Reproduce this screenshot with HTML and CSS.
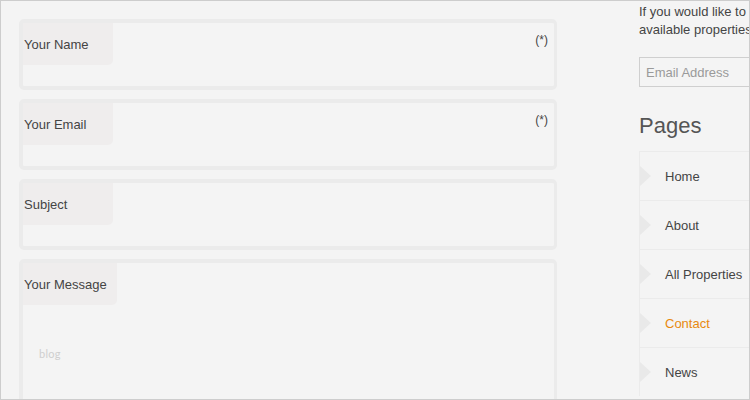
FILE: index.html
```html
<!DOCTYPE html>
<html>
<head>
<meta charset="utf-8">
<link rel="stylesheet" href="styles.css">
</head>
<body>
<div class="frame">
  <div class="form">
    <div class="field">
      <span class="label">Your Name</span>
      <span class="fill"></span>
      <span class="req">(*)</span>
    </div>
    <div class="field">
      <span class="label">Your Email</span>
      <span class="fill"></span>
      <span class="req">(*)</span>
    </div>
    <div class="field">
      <span class="label">Subject</span>
      <span class="fill"></span>
    </div>
    <div class="field message">
      <div class="msg-top"><span class="label">Your Message</span></div>
      <div class="blog">blog</div>
    </div>
  </div>
  <div class="sidebar">
    <p class="intro">If you would like to receive updates on our<br>available properties, please sign up below.</p>
    <div class="email">Email Address</div>
    <h2 class="pages-title">Pages</h2>
    <ul class="nav">
      <li class="nav-item">Home</li>
      <li class="nav-item">About</li>
      <li class="nav-item">All Properties</li>
      <li class="nav-item active">Contact</li>
      <li class="nav-item">News</li>
    </ul>
  </div>
</div>
</body>
</html>
```
FILE: styles.css
```css
html, body {
  margin: 0;
  padding: 0;
  background: #f4f4f4;
}
.frame {
  width: 750px;
  height: 400px;
  box-sizing: border-box;
  border: 1px solid #cdcdcd;
  overflow: hidden;
  display: flex;
  align-items: flex-start;
  font-family: "Liberation Sans", Arial, sans-serif;
  color: #444;
  background: #f4f4f4;
}
.form {
  flex: 0 0 538px;
  padding: 18px 0 0 18px;
  display: flex;
  flex-direction: column;
  gap: 9px;
}
.field {
  box-sizing: border-box;
  height: 71px;
  border: 4px solid #ebebeb;
  border-right-width: 3px;
  border-radius: 5px;
  background: #f4f4f4;
  display: flex;
  align-items: flex-start;
}
.label {
  box-sizing: border-box;
  min-width: 90px;
  height: 42px;
  padding: 0 10px 0 1px;
  display: flex;
  align-items: center;
  background: #efeded;
  border-bottom-right-radius: 5px;
  font-size: 13px;
  color: #444;
}
.fill {
  flex: 1;
}
.req {
  margin: 10px 6px 0 0;
  font-size: 12px;
  color: #444;
}
.field.message {
  height: 170px;
  flex-direction: column;
}
.msg-top {
  display: flex;
}
.blog {
  margin: 42px 0 0 16px;
  font-family: Lato, sans-serif;
  font-size: 11px;
  color: #cfcfcf;
  letter-spacing: 0.3px;
}
.sidebar {
  flex: 0 0 260px;
  margin-left: 82px;
}
.intro {
  margin: 2px 0 0;
  font-size: 13px;
  line-height: 18px;
  color: #444;
  white-space: nowrap;
}
.email {
  margin-top: 18px;
  box-sizing: border-box;
  height: 30px;
  border: 1px solid #cfcfcf;
  padding: 0 0 0 6px;
  display: flex;
  align-items: center;
  font-size: 13px;
  color: #9a9a9a;
  background: #f4f4f4;
}
.pages-title {
  margin: 24px 0 0;
  font-size: 22px;
  line-height: 30px;
  font-weight: normal;
  color: #555;
}
.nav {
  list-style: none;
  margin: 10px 0 0;
  padding: 0;
  border-left: 1px solid #ebebeb;
}
.nav-item {
  box-sizing: border-box;
  height: 49px;
  border-top: 1px solid #ebebeb;
  display: flex;
  align-items: center;
  font-size: 13px;
  color: #444;
}
.nav-item::before {
  content: "";
  width: 0;
  height: 0;
  border-left: 11px solid #e9e9e9;
  border-top: 10px solid transparent;
  border-bottom: 10px solid transparent;
  margin-right: 14px;
}
.nav-item.active {
  color: #e8890f;
}
```
